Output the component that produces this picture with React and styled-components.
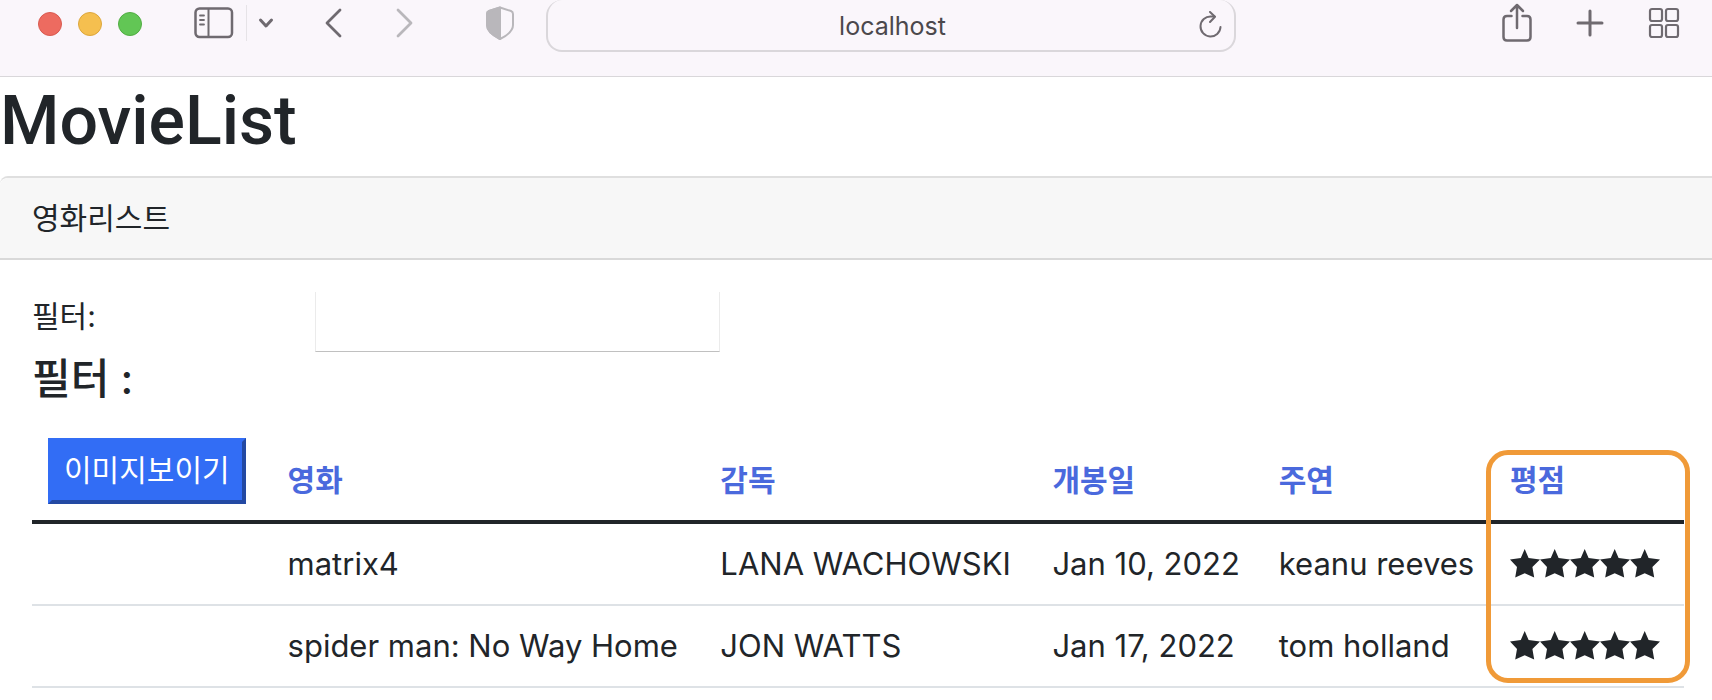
import React from "react";
import styled, { createGlobalStyle } from "styled-components";

const GlobalStyle = createGlobalStyle`
    * {
        box-sizing: border-box;
    }

    body {
        margin: 0;
        background-color: #ffffff;
        color: #212529;
        font-family: "Inter", "Noto Sans CJK KR", sans-serif;
        font-size: 30px;
        line-height: 48px;
        overflow-x: hidden;
    }
`;

const Toolbar = styled.header`
    display: flex;
    align-items: flex-start;
    height: 77px;
    padding: 0 32px 0 38px;
    background-color: #faf6fb;
    border-bottom: 1px solid #d9d7da;
`;

const ToolGroup = styled.div`
    display: flex;
    align-items: center;
    flex: ${(props) => (props.$end ? "1" : "none")};
    height: 46px;
    justify-content: ${(props) => (props.$end ? "flex-end" : "flex-start")};
    gap: ${(props) => (props.$end ? "44px" : "0")};
`;

const Lights = styled.div`
    display: flex;
    gap: 16px;
    margin-right: 52px;
    padding-top: 2px;
`;

const Light = styled.span`
    width: 24px;
    height: 24px;
    border-radius: 50%;
    background-color: ${(props) => props.$color};
    border: 1px solid ${(props) => props.$edge};
`;

const ToolButton = styled.button`
    display: flex;
    padding: 0;
    border: none;
    background: none;
    color: ${(props) => (props.$muted ? "#b9b7bb" : "#6f6a70")};
    margin-right: ${(props) => props.$gap || 0}px;

    svg {
        display: block;
        fill: none;
        stroke: currentColor;
        stroke-linecap: round;
        stroke-linejoin: round;
    }
`;

const Divider = styled.span`
    width: 1px;
    height: 36px;
    margin: 0 11px 0 12px;
    background-color: #e6e3e7;
`;

const AddressBar = styled.div`
    display: flex;
    align-items: center;
    flex: 0 1 690px;
    height: 52px;
    margin-left: 32px;
    padding: 0 11px 0 38px;
    border: 2px solid #dad7db;
    border-top: none;
    border-radius: 16px;
`;

const Address = styled.input`
    flex: 1;
    min-width: 0;
    padding: 2px 0 0;
    border: none;
    outline: none;
    background: none;
    color: #4b484c;
    font-family: inherit;
    font-size: 25px;
    text-align: center;
`;

const Title = styled.h1`
    margin: 0;
    padding: 2px 0 13px;
    font-family: "Roboto", sans-serif;
    font-size: 68px;
    font-weight: 500;
    line-height: 84px;
`;

const Card = styled.section`
    border-top: 2px solid #dfdfdf;
    border-radius: 8px 0 0 0;
`;

const CardHeader = styled.div`
    padding: 16px 32px;
    background-color: #f7f7f7;
    border-bottom: 2px solid #d9d9d9;
    border-radius: 8px 0 0 0;
`;

const CardBody = styled.div`
    padding: 32px 28px 32px 32px;
`;

const FilterRow = styled.div`
    display: flex;
`;

const FilterLabel = styled.label`
    width: 283px;
`;

const FilterInput = styled.input`
    width: 405px;
    height: 60px;
    padding: 0 8px;
    border: 1px solid #ebebeb;
    border-top: none;
    border-bottom-color: #c0c0c0;
    outline: none;
    font: inherit;
`;

const FilterTitle = styled.h4`
    margin: 0 0 16px;
    font-size: 42px;
    font-weight: 500;
    line-height: 54px;
`;

const TableWrap = styled.div`
    position: relative;
`;

const Table = styled.table`
    width: 100%;
    table-layout: fixed;
    border-collapse: collapse;
    white-space: nowrap;

    th,
    td {
        padding: 16px;
        text-align: left;
        vertical-align: bottom;
    }

    th {
        color: #4a69dd;
        font-weight: 700;
        border-bottom: 4px solid #212529;
    }

    td {
        font-size: 31px;
        border-bottom: 2px solid #dee2e6;
    }
`;

const Col = styled.col`
    width: ${(props) => props.$width}%;
`;

const ImageButton = styled.button`
    display: block;
    height: 66px;
    padding: 0 12px 2px;
    border: 4px solid;
    border-color: #326df5 #2349a3 #2349a3 #326df5;
    background-color: #326df5;
    color: #ffffff;
    font-family: inherit;
    font-size: 30px;
    line-height: 56px;
`;

const Stars = styled.div`
    display: flex;
    align-items: center;
    height: 48px;

    svg {
        fill: #212529;
    }
`;

const Highlight = styled.div`
    position: absolute;
    top: 28px;
    left: 88%;
    right: -6px;
    bottom: 5px;
    border: 5px solid #f09a38;
    border-radius: 22px;
    pointer-events: none;
`;

const columns = [
    { name: "image", width: 14.5 },
    { name: "영화", width: 26.2 },
    { name: "감독", width: 20.1 },
    { name: "개봉일", width: 13.7 },
    { name: "주연", width: 14 },
    { name: "평점", width: 11.5 },
];

const movies = [
    {
        title: "matrix4",
        director: "LANA WACHOWSKI",
        release: "Jan 10, 2022",
        actor: "keanu reeves",
        rating: 5,
    },
    {
        title: "spider man: No Way Home",
        director: "JON WATTS",
        release: "Jan 17, 2022",
        actor: "tom holland",
        rating: 5,
    },
];

const Rating = ({ value }) => (
    <Stars role="img" aria-label={`${value} / 5`}>
        {Array.from({ length: value }, (_, i) => (
            <svg key={i} width="30" height="30" viewBox="0 0 30 30">
                <path d="M14.700 0L18.600 9L30 10.400L22.400 18L24.200 28.600L14.700 24.300L5.200 28.600L7 18L0 10.400L10.800 9Z" />
            </svg>
        ))}
    </Stars>
);

const BrowserBar = () => (
    <Toolbar>
        <ToolGroup>
            <Lights>
                <Light $color="#ed6b60" $edge="#d95a50" />
                <Light $color="#f5bf4f" $edge="#dda73c" />
                <Light $color="#62c655" $edge="#51ad43" />
            </Lights>
            <ToolButton aria-label="Sidebar">
                <svg width="40" height="32" viewBox="0 0 40 32" strokeWidth="2.5">
                    <rect x="1.500" y="1.500" width="36.500" height="28.500" rx="4" />
                    <path d="M14.500 2v28" strokeWidth="2" />
                    <path d="M6 8.500h4M6 13h4M6 17.500h4" strokeWidth="1.800" />
                </svg>
            </ToolButton>
            <Divider />
            <ToolButton aria-label="Tab groups" $gap={50}>
                <svg width="16" height="12" viewBox="0 0 16 12" strokeWidth="3">
                    <path d="M2.500 3l5.500 6 5.500-6" />
                </svg>
            </ToolButton>
            <ToolButton aria-label="Back" $gap={54}>
                <svg width="18" height="30" viewBox="0 0 18 30" strokeWidth="2.800">
                    <path d="M16 2L3 15l13 13" />
                </svg>
            </ToolButton>
            <ToolButton aria-label="Forward" $gap={72} $muted>
                <svg width="18" height="30" viewBox="0 0 18 30" strokeWidth="2.800">
                    <path d="M2 2l13 13L2 28" />
                </svg>
            </ToolButton>
            <ToolButton aria-label="Privacy report" $muted>
                <svg width="28" height="34" viewBox="0 0 28 34" strokeWidth="2">
                    <path d="M14 1.500L25 5q2 .8 2 3v11c0 6-6 10.500-13 14C7 29.500 1 25 1 19V8q0-2.200 2-3z" />
                    <path
                        d="M14 1.500L3 5Q1 5.800 1 8v11c0 6 6 10.500 13 14z"
                        fill="currentColor"
                    />
                </svg>
            </ToolButton>
        </ToolGroup>
        <AddressBar>
            <Address aria-label="Address" defaultValue="localhost" />
            <ToolButton aria-label="Reload">
                <svg width="24" height="28" viewBox="0 0 24 28" strokeWidth="2">
                    <path d="M21.500 16a10 10 0 1 1-9.500-10.500h3.500" />
                    <path d="M11 1l5 4.700-5 5.300" />
                </svg>
            </ToolButton>
        </AddressBar>
        <ToolGroup $end>
            <ToolButton aria-label="Share">
                <svg width="30" height="40" viewBox="0 0 30 40" strokeWidth="2.500">
                    <path d="M9.500 13H5q-3.500 0-3.500 3.500V34q0 3.500 3.500 3.500h20q3.500 0 3.500-3.500V16.500q0-3.500-3.500-3.500h-4.500" />
                    <path d="M15 25V2M9 8l6-6 6 6" />
                </svg>
            </ToolButton>
            <ToolButton aria-label="New tab">
                <svg width="28" height="28" viewBox="0 0 28 28" strokeWidth="3">
                    <path d="M14 2v24M2 14h24" />
                </svg>
            </ToolButton>
            <ToolButton aria-label="Tab overview">
                <svg width="32" height="32" viewBox="0 0 32 32" strokeWidth="2.200">
                    <rect x="2" y="2" width="12" height="12" rx="2" />
                    <rect x="18" y="2" width="12" height="12" rx="2" />
                    <rect x="2" y="18" width="12" height="12" rx="2" />
                    <rect x="18" y="18" width="12" height="12" rx="2" />
                </svg>
            </ToolButton>
        </ToolGroup>
    </Toolbar>
);

const MovieTable = () => (
    <TableWrap>
        <Table>
            <colgroup>
                {columns.map((column) => (
                    <Col key={column.name} $width={column.width} />
                ))}
            </colgroup>
            <thead>
                <tr>
                    {columns.map((column) => (
                        <th key={column.name} scope="col">
                            {column.name === "image" ? (
                                <ImageButton>이미지보이기</ImageButton>
                            ) : (
                                column.name
                            )}
                        </th>
                    ))}
                </tr>
            </thead>
            <tbody>
                {movies.map((movie) => (
                    <tr key={movie.title}>
                        <td></td>
                        <td>{movie.title}</td>
                        <td>{movie.director}</td>
                        <td>{movie.release}</td>
                        <td>{movie.actor}</td>
                        <td>
                            <Rating value={movie.rating} />
                        </td>
                    </tr>
                ))}
            </tbody>
        </Table>
        <Highlight />
    </TableWrap>
);

const App = () => {
    return (
        <React.Fragment>
            <GlobalStyle />
            <BrowserBar />
            <main>
                <Title>MovieList</Title>
                <Card>
                    <CardHeader>영화리스트</CardHeader>
                    <CardBody>
                        <FilterRow>
                            <FilterLabel htmlFor="filter">필터:</FilterLabel>
                            <FilterInput id="filter" type="text" />
                        </FilterRow>
                        <FilterTitle>필터 :</FilterTitle>
                        <MovieTable />
                    </CardBody>
                </Card>
            </main>
        </React.Fragment>
    );
};

export default App;
